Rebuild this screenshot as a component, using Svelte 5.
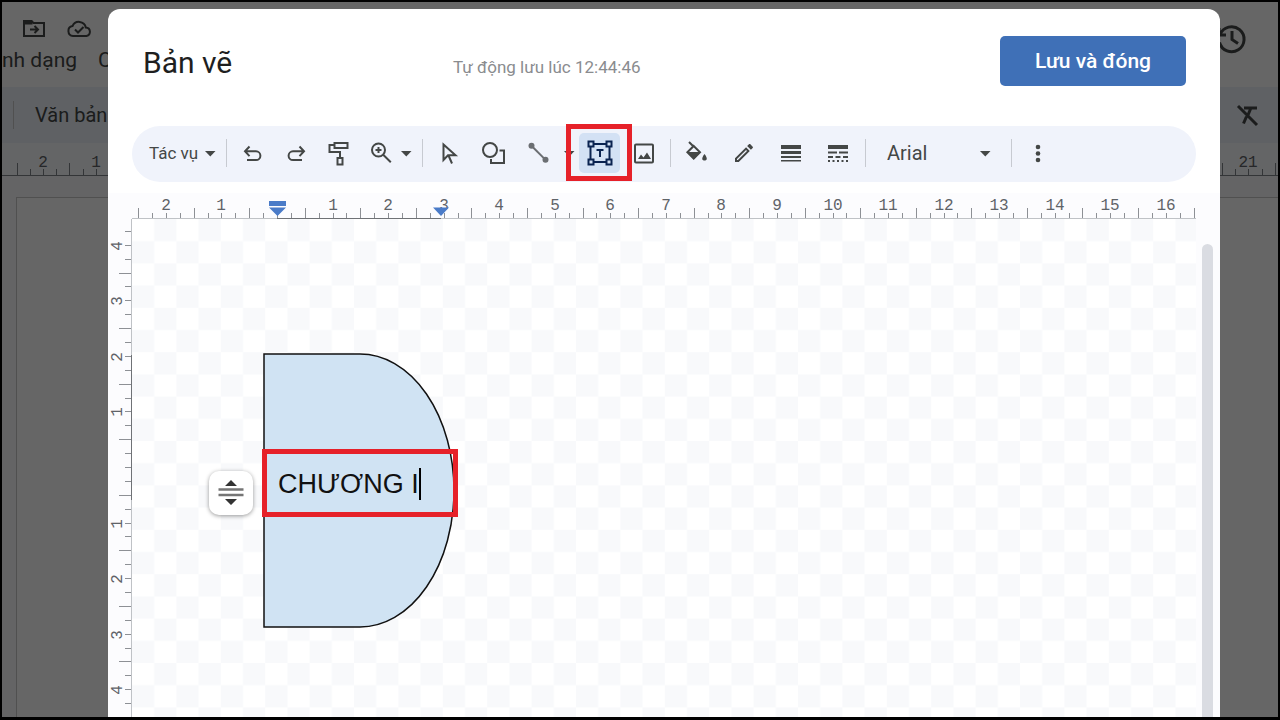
<script lang="ts">
    let shapeText = $state("CHƯƠNG I");
    let font = $state("Arial");

    const UNIT = 55.55;
    const DOC_UNIT = 52.4;

    type Tick = { pos: number; major: boolean };

    // Four ticks per unit, the long one halfway between two numbers
    function ticks(from: number, to: number, zero: number, unit: number) {
        const list: Tick[] = [];
        for (let q = from * 4 + 2; q <= to * 4 + 2; q++) {
            list.push({
                pos: Math.round(zero + (q * unit) / 4),
                major: Math.abs(q) % 4 === 2,
            });
        }
        return list;
    }

    function labels(from: number, to: number, zero: number, unit: number) {
        const list: { pos: number; text: number }[] = [];
        for (let n = from; n <= to; n++) {
            if (n !== 0) {
                list.push({ pos: Math.round(zero + n * unit), text: Math.abs(n) });
            }
        }
        return list;
    }

    const topTicks = ticks(-3, 16, 145, UNIT);
    const topLabels = labels(-2, 16, 145, UNIT);
    const sideTicks = ticks(-5, 4, 249, UNIT);
    const sideLabels = labels(-4, 4, 248, UNIT);
    const docTicks = ticks(-3, 21, 146, DOC_UNIT);
    const docLabels = labels(-2, 21, 146, DOC_UNIT);
</script>

{#snippet caret()}
    <svg class="caret" viewBox="0 0 16 32" aria-hidden="true">
        <path d="M3 14h10.5l-5.2 5.5z" fill="currentColor" />
    </svg>
{/snippet}

<div class="screen">
    <div class="doc">
        <div class="doc-head">
            <div>
                <div class="doc-icons">
                    <svg width="24" height="24" viewBox="0 0 24 24">
                        <path d="M2 5h7.5l2 2H22v13H2z" />
                        <path d="M2.5 5.500h7v2h-7z" fill="currentColor" />
                        <path d="M8 13.5h7M12.5 10l3.5 3.5-3.5 3.5" />
                    </svg>
                    <svg width="26" height="24" viewBox="0 0 26 24">
                        <path d="M7 20a5 5 0 0 1-.5-9.900 7 7 0 0 1 13.3 1.4A4.3 4.3 0 0 1 20.5 20z" />
                        <path d="M9 13.5l3 3 5.5-5.5" />
                    </svg>
                </div>
                <div class="doc-menu">
                    <span>nh dạng</span>
                    <span>C</span>
                </div>
            </div>
            <svg class="history" width="32" height="32" viewBox="0 0 32 32">
                <path d="M4 11.5a12.500 12.500 0 1 1-.5 8M3 5v7h7M16 8v8.5l6 4" />
            </svg>
        </div>
        <div class="doc-toolbar">
            <span class="doc-sep"></span>
            <span>Văn bản</span>
            <svg class="clear" width="24" height="24" viewBox="0 0 24 24">
                <path d="M2 3l19 19M8 5h13M14.5 6l-2.500 6M10.5 13.5l-3 7" />
            </svg>
        </div>
        <svg class="doc-ruler">
            {#each docTicks as tick}
                <path d="M{tick.pos + 0.5} 32v{tick.major ? -12 : -6}" />
            {/each}
            {#each docLabels as label}
                <text x={label.pos} y="24">{label.text}</text>
            {/each}
            <path d="M0 32.5h4000" />
        </svg>
        <div class="doc-body"><div class="doc-page"></div></div>
    </div>

    <div class="backdrop">
        <div class="dialog" role="dialog" aria-modal="true" aria-labelledby="dialog-title">
            <header>
                <h1 id="dialog-title">Bản vẽ</h1>
                <span class="saved">Tự động lưu lúc 12:44:46</span>
                <button class="save">Lưu và đóng</button>
            </header>

            <div class="toolbar" role="toolbar" aria-label="Bản vẽ">
                <button class="menu">Tác vụ{@render caret()}</button>
                <span class="sep"></span>
                <div class="group history-group">
                    <button aria-label="Hoàn tác">
                        <svg viewBox="0 0 32 32">
                            <path d="M12.5 9.500l-4.500 4.800 4.500 4.800M8.5 14.300H19a4.400 4.400 0 0 1 0 8.800H10" />
                        </svg>
                    </button>
                    <button aria-label="Làm lại">
                        <svg viewBox="0 0 32 32">
                            <path d="M19.5 9.500l4.500 4.800-4.500 4.800M23.5 14.300H13a4.400 4.400 0 0 0 0 8.800h9" />
                        </svg>
                    </button>
                    <button aria-label="Sao chép định dạng">
                        <svg viewBox="0 0 32 32">
                            <path d="M11.5 6h13v5h-13zM11 8H6.5V15H17V21M14.5 21h5v6.500h-5z" />
                        </svg>
                    </button>
                    <button aria-label="Thu phóng">
                        <svg viewBox="0 0 32 32">
                            <circle cx="12.5" cy="13" r="6.5" />
                            <path d="M17.2 17.700l7.600 7.600M12.5 10v6M9.5 13h6" />
                        </svg>
                    </button>
                </div>
                <button class="drop" aria-label="Tuỳ chọn thu phóng">{@render caret()}</button>
                <span class="sep"></span>
                <div class="group shape-group">
                    <button aria-label="Chọn">
                        <svg viewBox="0 0 32 32">
                            <path d="M10.5 7.500v15.500l4.500-4.700h7.500zM15.5 18.500l3.500 8" />
                        </svg>
                    </button>
                    <button aria-label="Hình dạng">
                        <svg viewBox="0 0 32 32">
                            <circle cx="12" cy="13" r="7" />
                            <path d="M21.5 13.500h4.500v12.500H13v-4" />
                        </svg>
                    </button>
                    <button class="faded" aria-label="Đường kẻ">
                        <svg viewBox="0 0 32 32">
                            <path d="M8.7 9l13.600 13.600" />
                            <circle class="solid" cx="8.5" cy="8.8" r="3" />
                            <circle class="solid" cx="22.5" cy="22.8" r="3" />
                        </svg>
                    </button>
                </div>
                <button class="drop line-drop" aria-label="Kiểu đường kẻ">{@render caret()}</button>
                <button class="text-box" aria-label="Hộp văn bản" aria-pressed="true">
                    <svg viewBox="0 0 32 32">
                        <path d="M9.5 7h13M9.5 25h13M6.5 10v12M25.5 10v12" />
                        <path d="M4.5 4.500h5v5h-5zM22.5 4.500h5v5h-5zM4.5 22.500h5v5h-5zM22.5 22.500h5v5h-5z" />
                        <path d="M12.500 13h7M16 13v7" />
                    </svg>
                    <span class="mark"></span>
                </button>
                <button class="picture" aria-label="Hình ảnh">
                    <svg viewBox="0 0 32 32">
                        <rect x="7" y="7.500" width="18" height="18" rx="1" />
                        <path class="solid" d="M10 22l3-4.500 2.500 3 3.500-5 4 6.500z" />
                    </svg>
                </button>
                <span class="sep"></span>
                <div class="group style-group">
                    <button aria-label="Màu nền">
                        <svg viewBox="0 0 32 32">
                            <path d="M8 5l5 5M12.7 9l6.300 6.300-6.300 6.200-6.300-6.200z" />
                            <path class="solid" d="M6 15h13.500l-6.800 7.300z" />
                            <path class="solid" d="M23.5 17c3.500 4.500 2.500 6.500 0 6.500s-3.500-2 0-6.500z" />
                        </svg>
                    </button>
                    <button aria-label="Màu đường viền">
                        <svg viewBox="0 0 32 32">
                            <path
                                class="solid"
                                transform="translate(4 4)"
                                d="M14.06 9.02l.92.92L5.92 19H5v-.92l9.06-9.06M17.66 3c-.25 0-.51.1-.7.29l-1.83 1.83 3.75 3.75 1.83-1.83c.39-.39.39-1.02 0-1.41l-2.34-2.34c-.2-.2-.45-.29-.71-.29zm-3.6 3.19L3 17.25V21h3.75L17.81 9.94l-3.75-3.75z"
                            />
                        </svg>
                    </button>
                    <button aria-label="Độ dày đường viền">
                        <svg viewBox="0 0 32 32">
                            <path class="solid" d="M6 8h20v4H6zM6 14h20v3H6zM6 19h20v2H6zM6 23h20v1.500H6z" />
                        </svg>
                    </button>
                    <button aria-label="Kiểu gạch đường viền">
                        <svg viewBox="0 0 32 32">
                            <path class="solid" d="M6 8h20v4H6zM6 14.500h9v2H6zM17 14.500h9v2h-9zM6 19h5v2H6zM13.5 19h5v2h-5zM21 19h5v2h-5z" />
                            <path class="solid" d="M6 23h2v2H6zM10.5 23h2v2h-2zM15 23h2v2h-2zM19.5 23h2v2h-2zM24 23h2v2h-2z" />
                        </svg>
                    </button>
                </div>
                <span class="sep"></span>
                <div class="font">
                    <select aria-label="Phông chữ" bind:value={font}>
                        <option>Arial</option>
                        <option>Roboto</option>
                    </select>
                    {@render caret()}
                </div>
                <span class="sep"></span>
                <button aria-label="Thêm">
                    <svg viewBox="0 0 32 32">
                        <circle class="solid" cx="16" cy="10" r="2.3" />
                        <circle class="solid" cx="16" cy="16.5" r="2.3" />
                        <circle class="solid" cx="16" cy="23" r="2.3" />
                    </svg>
                </button>
            </div>

            <div class="workspace">
                <svg class="ruler-top">
                    {#each topTicks as tick}
                        <path d="M{tick.pos + 0.5} 25v{tick.major ? -10 : -5}" />
                    {/each}
                    {#each topLabels as label}
                        <text x={label.pos} y="17">{label.text}</text>
                    {/each}
                    <path class="line" d="M0 25.5H1064" />
                    <path class="active" d="M145 25.5H309" />
                    <path class="marker" d="M137 8h17v5h-17zM137 14.5h17l-8.500 8.500z" />
                    <path class="marker" d="M301 14.5h16l-8 8.500z" />
                </svg>

                <svg class="ruler-side">
                    {#each sideTicks as tick}
                        <path d="M23 {tick.pos - 0.5}h{tick.major ? -12 : -6}" />
                    {/each}
                    {#each sideLabels as label}
                        <text transform="translate(14 {label.pos + 1}) rotate(-90)">{label.text}</text>
                    {/each}
                    <path class="line" d="M23.5 0V2000" />
                    <path class="active" d="M23.5 136V281" />
                </svg>

                <div class="canvas">
                    <svg class="board" aria-hidden="true">
                        <defs>
                            <pattern id="check" width="44.4" height="44.4" patternUnits="userSpaceOnUse">
                                <path d="M22.2 0h22.2v22.2H22.2zM0 22.2h22.2v22.2H0z" fill="#f8f9fb" />
                            </pattern>
                        </defs>
                        <rect width="100%" height="100%" fill="url(#check)" />
                    </svg>
                    <div class="shape">
                        <svg width="193" height="276" viewBox="0 0 193 276" aria-hidden="true">
                            <path d="M1 1H97A94 136.500 0 0 1 97 274H1z" />
                        </svg>
                        <div class="field">
                            <input type="text" aria-label="Văn bản trong hình" bind:value={shapeText} />
                            <span class="cursor"></span>
                        </div>
                    </div>
                    <button class="autofit" aria-label="Tự động điều chỉnh">
                        <svg width="28" height="28" viewBox="0 0 28 28">
                            <path d="M14 1l6 6H8zM14 26l6-6H8z" fill="#333" />
                            <path d="M1.5 10.500h25M1.5 16h25" stroke="#757575" stroke-width="2.5" />
                        </svg>
                    </button>
                </div>
                <div class="scroll"><div class="thumb"></div></div>
            </div>
        </div>
    </div>
</div>

<style>
    :global(body) {
        margin: 0;
    }
    .screen {
        position: relative;
        box-sizing: border-box;
        height: 100vh;
        border: 2px solid #000;
        border-bottom-width: 3px;
        overflow: hidden;
        font-family: Roboto, "Liberation Sans", sans-serif;
        color: #444746;
    }
    svg {
        display: block;
        fill: none;
        stroke: none;
    }
    button {
        display: flex;
        align-items: center;
        justify-content: center;
        padding: 0;
        border: 0;
        background: none;
        color: inherit;
        font: inherit;
        cursor: pointer;
    }

    /* Document behind the dialog */
    .doc {
        display: flex;
        flex-direction: column;
        height: 100%;
        background: #fff;
        font-size: 20px;
    }
    .doc svg {
        stroke: currentColor;
        stroke-width: 2;
    }
    .doc-head {
        display: flex;
        justify-content: space-between;
        height: 85px;
    }
    .doc-icons {
        display: flex;
        gap: 20px;
        padding: 14px 0 0 20px;
    }
    .doc-menu {
        display: flex;
        gap: 21px;
        padding-top: 8px;
        font-size: 21px;
        line-height: 24px;
    }
    .doc .history {
        margin: 21px 30px 0 0;
        stroke-width: 3;
    }
    .doc-toolbar {
        display: flex;
        align-items: center;
        gap: 21px;
        height: 56px;
        padding: 0 18px 0 11px;
        background: #edf2fa;
    }
    .doc-sep {
        width: 1px;
        height: 28px;
        background: #c7c7c7;
    }
    .doc .clear {
        margin-left: auto;
        stroke-width: 3;
    }
    .doc-ruler {
        flex: none;
        width: 100%;
        height: 33px;
        font-family: "Liberation Mono", monospace;
        font-size: 16px;
        text-anchor: middle;
        background: #fbfcfe;
    }
    .doc .doc-ruler path {
        stroke: #80868b;
        stroke-width: 1;
    }
    .doc .doc-ruler text {
        fill: #5f6368;
        stroke: none;
    }
    .doc-body {
        display: flex;
        flex: 1;
        padding: 21px 0 0 14px;
        background: #fafbfd;
    }
    .doc-page {
        flex: 1;
        border: 1px solid #c7c7c7;
        border-width: 1px 0 0 1px;
        background: #fff;
    }

    .backdrop {
        position: absolute;
        inset: 0;
        display: flex;
        padding: 7px 58px 0 106px;
        background: rgba(0, 0, 0, 0.6);
    }
    .dialog {
        display: flex;
        flex: 1;
        flex-direction: column;
        min-width: 0;
        border-radius: 12px 12px 0 0;
        background: #fff;
        overflow: hidden;
    }

    header {
        display: flex;
        align-items: center;
        padding: 27px 34px 40px 35px;
    }
    h1 {
        min-width: 310px;
        margin: 0;
        padding-top: 4px;
        font-size: 30px;
        font-weight: 400;
        line-height: 40px;
        color: #1f1f1f;
    }
    .saved {
        padding-top: 12px;
        font-size: 17px;
        line-height: 20px;
        color: #8a8c8f;
    }
    .save {
        width: 186px;
        height: 50px;
        margin-left: auto;
        border-radius: 5px;
        background: #3f70b7;
        color: #fff;
        font-size: 21px;
        font-weight: 500;
    }

    .toolbar {
        display: flex;
        align-items: center;
        box-sizing: border-box;
        height: 56px;
        margin: 0 24px 11px;
        padding: 0 0 2px 17px;
        border-radius: 28px;
        background: #f0f3fb;
    }
    .toolbar svg {
        flex: none;
        width: 32px;
        height: 32px;
        stroke: currentColor;
        stroke-width: 2;
    }
    .toolbar .caret {
        width: 16px;
        stroke: none;
    }
    .toolbar .solid {
        fill: currentColor;
        stroke: none;
    }
    .menu {
        width: 69px;
        justify-content: space-between;
        font-size: 17px;
        white-space: nowrap;
    }
    .sep {
        width: 1px;
        height: 28px;
        margin: 0 10px 0 8px;
        background: #c7cad1;
    }
    .group {
        display: flex;
    }
    .history-group {
        gap: 11px;
    }
    .shape-group {
        gap: 13px;
    }
    .style-group {
        gap: 15px;
        margin-right: 3px;
    }
    .faded {
        color: #6b6e72;
    }
    .line-drop {
        margin-left: 6px;
    }
    .text-box {
        position: relative;
        width: 41px;
        height: 40px;
        margin: 0 8px 0 2px;
        border-radius: 5px;
        background: #d3e1f4;
        color: #0a2350;
    }
    .mark {
        position: absolute;
        inset: -9px -12px -8px -13px;
        border: 5px solid #e62129;
    }
    .picture {
        margin-right: 2px;
    }
    .font {
        display: flex;
        align-items: center;
        margin-left: 7px;
        padding-right: 10px;
    }
    select {
        width: 110px;
        margin-right: -16px;
        padding: 0 16px 0 4px;
        border: 0;
        appearance: none;
        background: none;
        color: inherit;
        font: inherit;
        font-size: 20px;
    }
    .font .caret {
        pointer-events: none;
    }

    .workspace {
        display: grid;
        flex: 1;
        grid-template-columns: 24px 1fr 24px;
        grid-template-rows: 26px 1fr;
        min-height: 0;
        background: #fcfcfe;
    }
    .ruler-top,
    .ruler-side {
        width: 100%;
        height: 100%;
        font-family: "Liberation Mono", monospace;
        font-size: 16px;
        text-anchor: middle;
        stroke: #8d9095;
    }
    .ruler-top {
        grid-column: 2 / 4;
    }
    .ruler-side {
        grid-column: 1;
        min-height: 0;
    }
    .workspace text {
        fill: #5f6368;
        stroke: none;
    }
    .workspace .line {
        stroke: #bfc2c6;
    }
    .workspace .active {
        stroke: #6f7276;
    }
    .marker {
        fill: #4a7bc8;
        stroke: none;
    }

    .canvas {
        position: relative;
        background: #fff;
        overflow: hidden;
    }
    .board {
        width: 100%;
        height: 100%;
    }
    .shape {
        position: absolute;
        left: 131px;
        top: 134px;
    }
    .shape path {
        fill: #d0e3f3;
        stroke: #111;
        stroke-width: 1.5;
    }
    .field {
        position: absolute;
        left: -1px;
        top: 96px;
        display: flex;
        align-items: center;
        box-sizing: border-box;
        width: 196px;
        height: 68px;
        padding: 2px 0 0 11px;
        border: 5px solid #e62129;
    }
    input {
        field-sizing: content;
        padding: 0;
        border: 0;
        outline: 0;
        background: none;
        font-family: Arial, "Liberation Sans", sans-serif;
        font-size: 27px;
        line-height: 32px;
        color: #111;
    }
    .cursor {
        width: 2px;
        height: 32px;
        background: #000;
    }
    .autofit {
        position: absolute;
        left: 77px;
        top: 252px;
        width: 44px;
        height: 44px;
        border-radius: 10px;
        background: #fff;
        box-shadow: 0 1px 4px rgba(0, 0, 0, 0.4);
    }
    .scroll {
        display: flex;
        padding: 25px 7px 0 6px;
    }
    .thumb {
        flex: 1;
        border-radius: 6px 6px 0 0;
        background: #dadce2;
    }
</style>
